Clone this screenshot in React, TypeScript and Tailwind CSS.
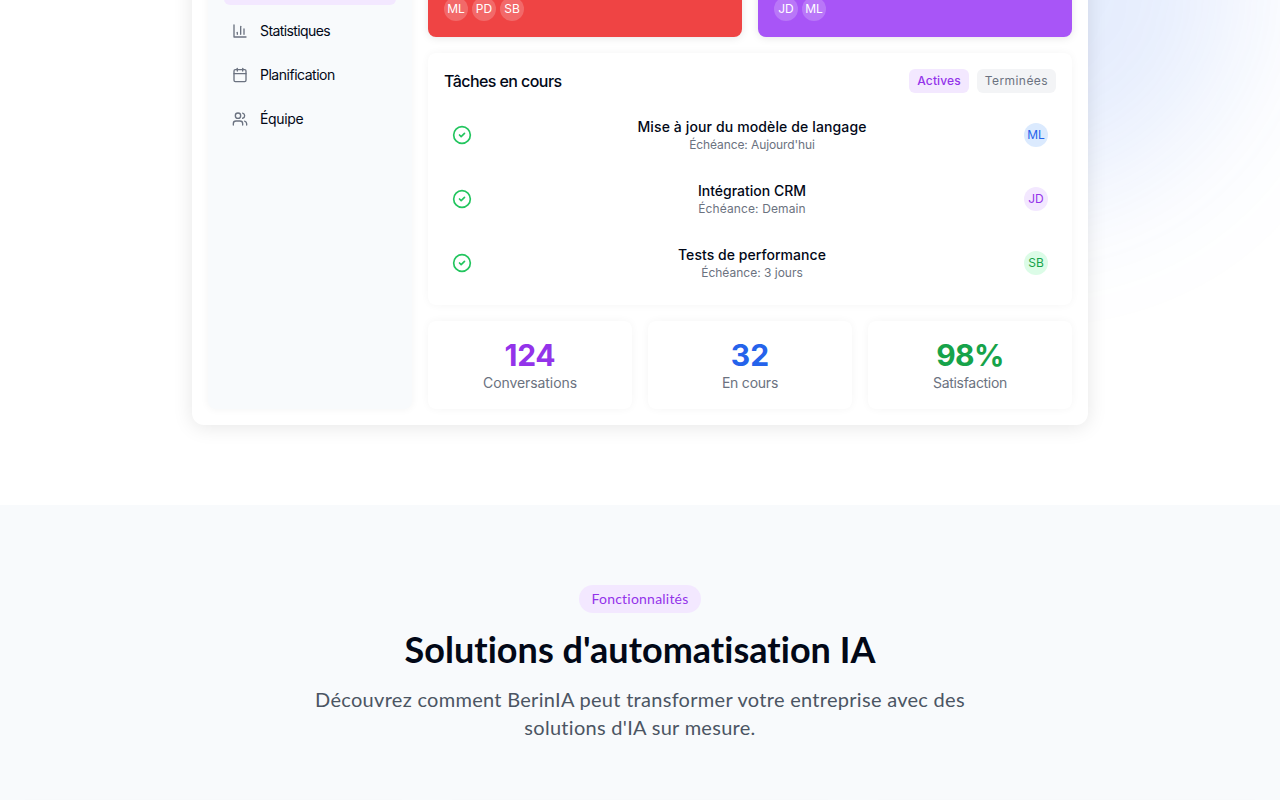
import { Calendar, Users } from "lucide-react";

const navItems = [
  { label: "Statistiques", icon: StatsIcon, tracking: "tracking-[-0.59px]" },
  { label: "Planification", icon: Calendar, tracking: "tracking-[-0.48px]" },
  { label: "Équipe", icon: Users, tracking: "tracking-tight" },
];

const tasks = [
  {
    title: "Mise à jour du modèle de langage",
    due: "Aujourd'hui",
    who: "ML",
    tone: "bg-[#dbeafe] text-[#2563eb]",
    titleTracking: "tracking-[0.125px]",
    dueTracking: "tracking-[-0.1px]",
  },
  {
    title: "Intégration CRM",
    due: "Demain",
    who: "JD",
    tone: "bg-[#f3e8ff] text-[#9333ea]",
    titleTracking: "tracking-normal",
    dueTracking: "tracking-[0.12px]",
  },
  {
    title: "Tests de performance",
    due: "3 jours",
    who: "SB",
    tone: "bg-[#dcfce7] text-[#16a34a]",
    titleTracking: "tracking-[0.05px]",
    dueTracking: "tracking-normal",
  },
];

const stats = [
  { value: "124", label: "Conversations", tone: "text-[#9333ea] tracking-[-0.3px]", tracking: "tracking-[-0.08px]" },
  { value: "32", label: "En cours", tone: "text-[#2563eb]", tracking: "tracking-[-0.22px]" },
  { value: "98%", label: "Satisfaction", tone: "text-[#16a34a] tracking-[-0.7px]", tracking: "tracking-[-0.3px]" },
];

const projects = [
  { tone: "bg-[#ef4444]", team: ["ML", "PD", "SB"] },
  { tone: "bg-[#a855f7]", team: ["JD", "ML"] },
];

const softShadow = "shadow-[0_0_8px_rgba(0,0,0,0.045)]";

function StatsIcon({ className }: { className?: string }) {
  return (
    <svg className={className} viewBox="0 0 24 24" fill="none" stroke="currentColor" strokeWidth="2" strokeLinecap="round" strokeLinejoin="round">
      <path d="M3 3v18h18" />
      <path d="M18 17V9" />
      <path d="M13 17V5" />
      <path d="M8 17v-3" />
    </svg>
  );
}

function CheckIcon() {
  return (
    <svg className="size-5 shrink-0 text-[#22c55e]" viewBox="0 0 24 24" fill="none" stroke="currentColor" strokeWidth="2" strokeLinecap="round" strokeLinejoin="round">
      <circle cx="12" cy="12" r="10" />
      <path d="m9 12 2 2 4-4" />
    </svg>
  );
}

export default function App() {
  return (
    <div className="relative flex h-[800px] flex-col overflow-hidden bg-white font-['Inter',sans-serif] text-[#020817] [text-rendering:optimizeSpeed]">
      <div className="absolute -top-[225px] left-[820px] size-[420px] rounded-full bg-[#2563eb]/12 blur-[72px]" />

      <section className="relative flex h-[505px] shrink-0 justify-center">
        <div className="-mt-[47px] grid h-[472px] w-[896px] grid-cols-12 gap-4 rounded-xl bg-white p-4 shadow-[0_2px_20px_rgba(0,0,0,0.1)]">
          <aside className="col-span-3 rounded-lg bg-[#f8fafc] px-4 shadow-[0_0_8px_rgba(0,0,0,0.05)]">
            <nav className="flex flex-col gap-2">
              <div className="h-9 rounded-md bg-[#f3e8ff]" />
              {navItems.map(({ label, icon: Icon, tracking }) => (
                <div key={label} className="flex items-center gap-3 p-2 text-sm">
                  <Icon className="size-4 text-[#6b7280]" />
                  <span className={tracking}>{label}</span>
                </div>
              ))}
            </nav>
          </aside>

          <main className="col-span-9 flex flex-col gap-4">
            <div className="grid h-[68px] grid-cols-2 gap-4">
              {projects.map((project) => (
                <div key={project.tone} className={`flex items-end gap-1 rounded-lg p-4 shadow-[0_1px_8px_rgba(0,0,0,0.1)] ${project.tone}`}>
                  {project.team.map((who) => (
                    <span key={who} className="flex size-6 items-center justify-center rounded-full bg-white/20 text-xs text-white">
                      {who}
                    </span>
                  ))}
                </div>
              ))}
            </div>

            <div className={`rounded-lg bg-white p-4 ${softShadow}`}>
              <div className="mb-4 flex items-center justify-between">
                <h3 className="text-base font-medium tracking-[-0.57px]">Tâches en cours</h3>
                <div className="flex gap-2 text-xs">
                  <span className="rounded-md bg-[#f3e8ff] px-2 py-1 font-medium tracking-[0.12px] text-[#9333ea]">Actives</span>
                  <span className="rounded-md bg-[#f3f4f6] px-2 py-1 tracking-[0.43px] text-[#6b7280]">Terminées</span>
                </div>
              </div>
              <div className="flex flex-col gap-3">
                {tasks.map((task) => (
                  <div key={task.title} className="flex items-center p-2">
                    <CheckIcon />
                    <div className="ml-2 flex-1 text-center">
                      <div className={`text-sm font-medium ${task.titleTracking}`}>{task.title}</div>
                      <div className={`text-xs text-[#6b7280] ${task.dueTracking}`}>Échéance: {task.due}</div>
                    </div>
                    <span className={`flex size-6 items-center justify-center rounded-full text-xs ${task.tone}`}>{task.who}</span>
                  </div>
                ))}
              </div>
            </div>

            <div className="grid grid-cols-3 gap-4">
              {stats.map((stat) => (
                <div key={stat.label} className={`rounded-lg bg-white p-4 text-center ${softShadow}`}>
                  <div className={`text-3xl font-bold ${stat.tone}`}>{stat.value}</div>
                  <div className={`text-sm text-[#6b7280] ${stat.tracking}`}>{stat.label}</div>
                </div>
              ))}
            </div>
          </main>
        </div>
      </section>

      <section className="relative flex shrink-0 flex-col items-center bg-[#f8fafc] px-4 pt-20 font-['Lato',sans-serif]">
        <span className="rounded-full bg-[#f3e8ff] px-3 py-1 text-sm tracking-[0.22px] text-[#9333ea]">Fonctionnalités</span>
        <h2 className="mt-4 text-4xl font-bold tracking-[0.02px]">Solutions d'automatisation IA</h2>
        <p className="mt-4 w-[672px] text-center text-xl leading-7 tracking-[0.29px] text-[#4b5563]">
          Découvrez comment BerinIA peut transformer votre entreprise avec des solutions d'IA sur mesure.
        </p>
        <div className="mt-[60px] grid w-full grid-cols-3 gap-8">
          <div className="h-40 rounded-lg bg-white shadow-sm" />
          <div className="h-40 rounded-lg bg-white shadow-sm" />
          <div className="h-40 rounded-lg bg-white shadow-sm" />
        </div>
      </section>
    </div>
  );
}
